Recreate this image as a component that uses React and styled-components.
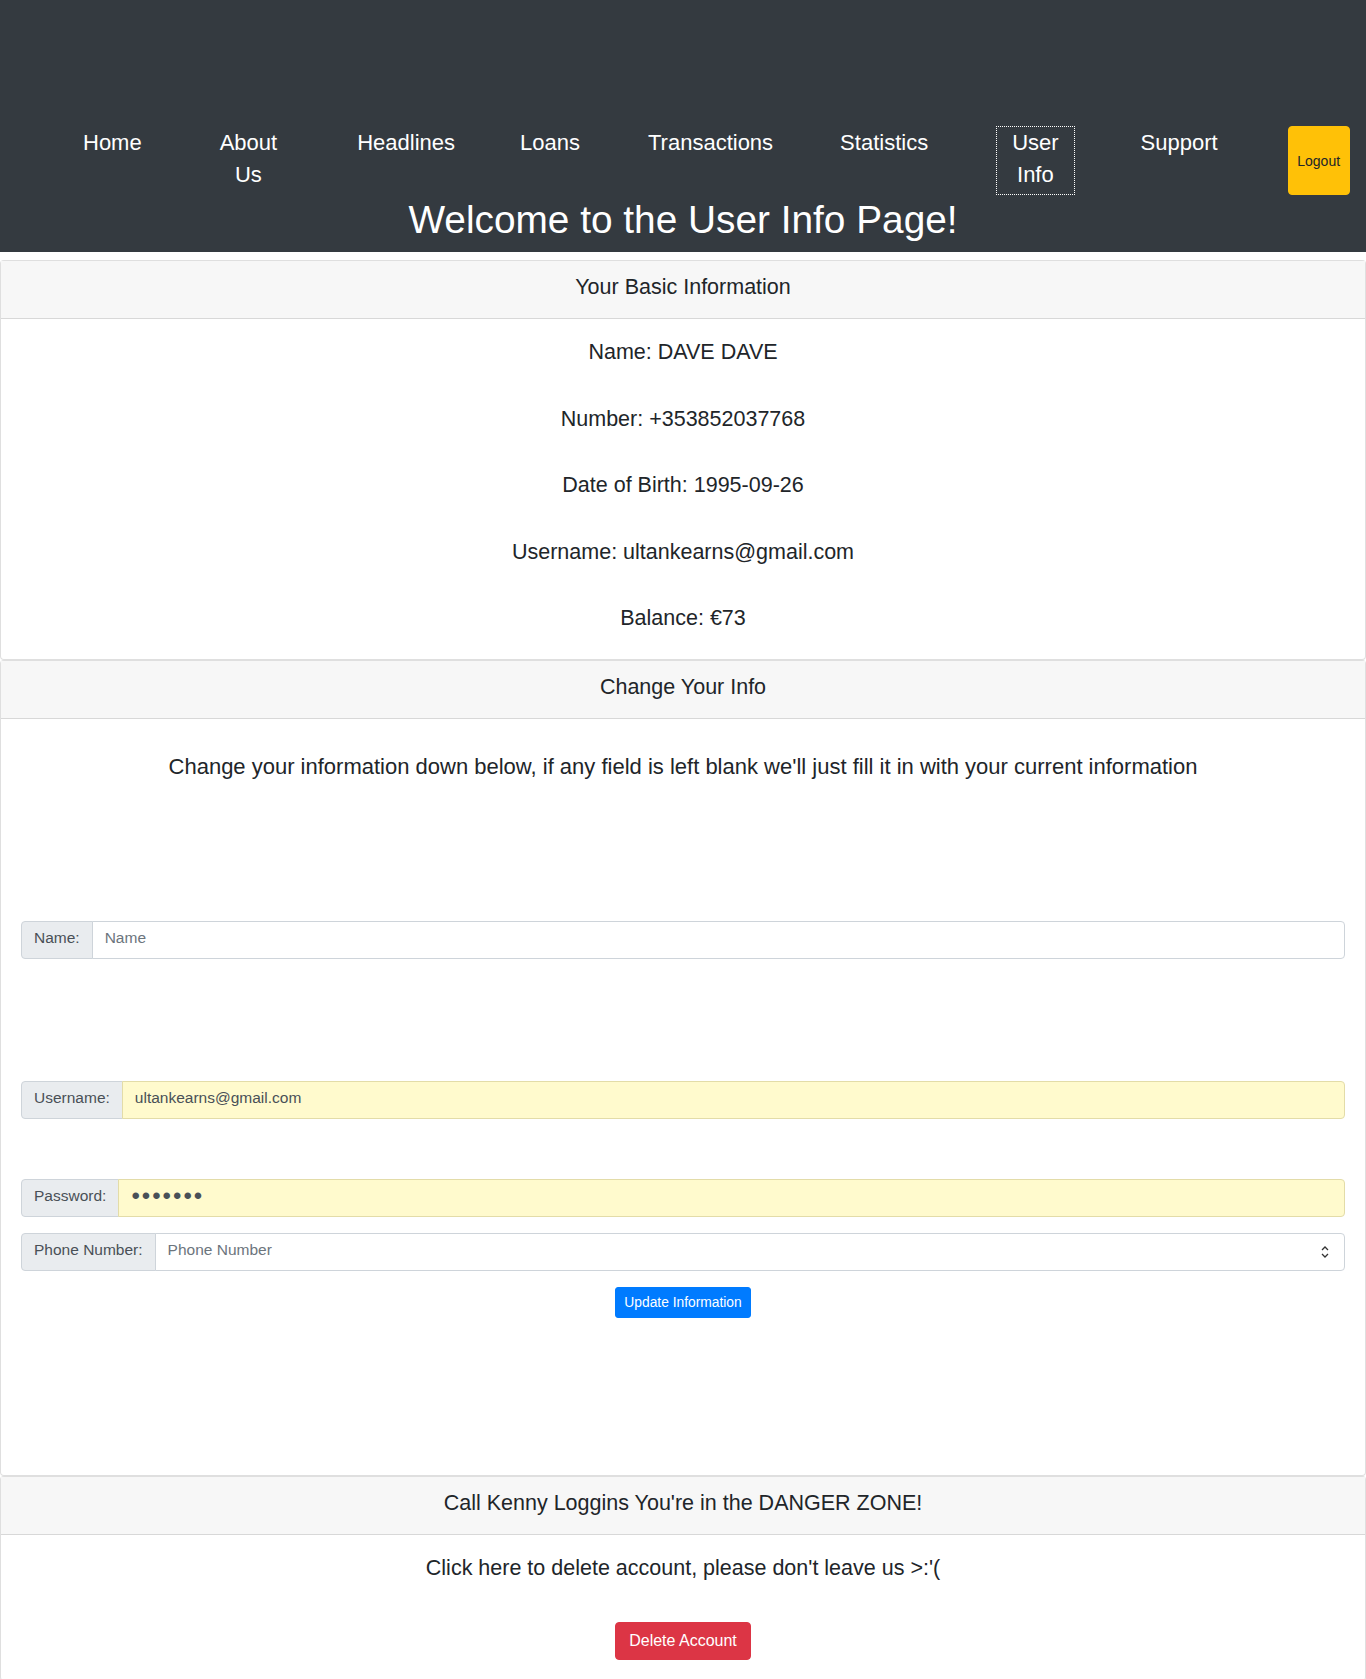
import React from "react";
import styled, { createGlobalStyle } from "styled-components";

const Global = createGlobalStyle`
  html, body { margin: 0; padding: 0; background: #fff; }
  body {
    font-family: "Liberation Sans", Arial, sans-serif;
    color: #212529;
    -webkit-font-smoothing: antialiased;
  }
  * { box-sizing: border-box; }
`;

const Header = styled.header`
  background: #343a40;
  padding: 126px 0 9px;
  margin-bottom: 8px;
`;

const NavList = styled.nav`
  display: flex;
  align-items: stretch;
  padding-left: 67px;
`;

const NavItem = styled.a`
  display: block;
  margin-left: ${(p) => p.$space || 0}px;
  padding: 0 15px 3px;
  border: 1px ${(p) => (p.$active ? "dotted #fff" : "solid transparent")};
  color: #fff;
  font-size: 22px;
  line-height: 32px;
  text-align: center;
  text-decoration: none;
  white-space: nowrap;
  ${(p) => p.$wrap && "white-space: normal; width: min-content;"}
`;

const LogoutButton = styled.button`
  margin-left: ${(p) => p.$space || 0}px;
  width: 62px;
  padding: 0 8px;
  background: #ffc107;
  border: 1px solid #ffc107;
  border-radius: 4px;
  color: #212529;
  font-family: inherit;
  font-size: 14px;
`;

const Title = styled.h1`
  margin: 2px 0 0;
  color: #fff;
  font-weight: 400;
  font-size: 38.8px;
  line-height: 46px;
  text-align: center;
`;

const Card = styled.section`
  border: 1px solid rgba(0, 0, 0, 0.125);
  border-radius: 4px;
  background: #fff;
`;

const CardHeader = styled.div`
  background: #f7f7f7;
  border-bottom: 1px solid rgba(0, 0, 0, 0.125);
  padding: 10px 20px 15px;
  font-size: 21.5px;
  line-height: 32px;
  text-align: center;
`;

const CardBody = styled.div`
  display: flex;
  flex-direction: column;
  gap: ${(p) => p.$gap || 0}px;
  padding: ${(p) => p.$pt || 20}px 20px ${(p) => p.$pb || 20}px;
`;

const Line = styled.p`
  margin: ${(p) => p.$mt || 0}px 0 0;
  font-size: ${(p) => p.$size || 21.5}px;
  line-height: 32px;
  text-align: center;
`;

const InputGroup = styled.div`
  display: flex;
  height: 38px;
  margin-top: ${(p) => p.$mt || 0}px;
`;

const GroupLabel = styled.label`
  display: flex;
  align-items: center;
  padding: 0 12px 4px;
  background: #e9ecef;
  border: 1px solid #ced4da;
  border-radius: 4px 0 0 4px;
  color: #495057;
  font-size: 15.5px;
  white-space: nowrap;
`;

const FieldBox = styled.div`
  flex: 1;
  display: flex;
  align-items: center;
  margin-left: -1px;
  background: ${(p) => (p.$filled ? "#fffacd" : "#fff")};
  border: 1px solid ${(p) => (p.$filled ? "#e3dca8" : "#ced4da")};
  border-radius: 0 4px 4px 0;
`;

const Field = styled.input`
  flex: 1;
  min-width: 0;
  height: 100%;
  padding: 0 12px 4px;
  border: 0;
  outline: none;
  background: transparent;
  color: #495057;
  font-family: inherit;
  font-size: ${(p) => (p.$dots ? 24 : 15.5)}px;
  letter-spacing: ${(p) => (p.$dots ? 2 : 0)}px;
  &::placeholder { color: #6c757d; }
`;

const Spinner = styled.svg`
  width: 10px;
  height: 16px;
  margin-right: 14px;
`;

const ButtonRow = styled.div`
  display: flex;
  justify-content: center;
  margin-top: ${(p) => p.$mt || 0}px;
`;

const Button = styled.button`
  min-width: 136px;
  padding: ${(p) => (p.$small ? "4px 8px" : "6px 12px")};
  border: 1px solid ${(p) => p.$color};
  border-radius: ${(p) => (p.$small ? 3 : 4)}px;
  background: ${(p) => p.$color};
  color: #fff;
  font-family: inherit;
  font-size: ${(p) => (p.$small ? 13.8 : 16)}px;
  line-height: ${(p) => (p.$small ? 21 : 24)}px;
  white-space: nowrap;
`;

const navItems = [
  { label: "Home", space: 0 },
  { label: "About Us", space: 46, wrap: true },
  { label: "Headlines", space: 48 },
  { label: "Loans", space: 33 },
  { label: "Transactions", space: 36 },
  { label: "Statistics", space: 35 },
  { label: "User Info", space: 52, wrap: true, active: true },
  { label: "Support", space: 50 },
];

const info = [
  "Name: DAVE DAVE",
  "Number: +353852037768",
  "Date of Birth: 1995-09-26",
  "Username: ultankearns@gmail.com",
  "Balance: €73",
];

export default function App() {
  return (
    <>
      <Global />
      <Header>
        <NavList>
          {navItems.map((n) => (
            <NavItem key={n.label} href="#" $space={n.space} $wrap={n.wrap} $active={n.active}>
              {n.label}
            </NavItem>
          ))}
          <LogoutButton $space={54}>Logout</LogoutButton>
        </NavList>
        <Title>Welcome to the User Info Page!</Title>
      </Header>

      <Card>
        <CardHeader>Your Basic Information</CardHeader>
        <CardBody $gap={34.6} $pt={17} $pb={25}>
          {info.map((t) => (
            <Line key={t}>{t}</Line>
          ))}
        </CardBody>
      </Card>

      <Card>
        <CardHeader>Change Your Info</CardHeader>
        <CardBody $pb={157}>
          <Line $mt={12} $size={22}>
            Change your information down below, if any field is left blank we'll just fill it in with your current information
          </Line>
          <InputGroup $mt={138}>
            <GroupLabel>Name:</GroupLabel>
            <FieldBox>
              <Field placeholder="Name" />
            </FieldBox>
          </InputGroup>
          <InputGroup $mt={122}>
            <GroupLabel>Username:</GroupLabel>
            <FieldBox $filled>
              <Field defaultValue="ultankearns@gmail.com" />
            </FieldBox>
          </InputGroup>
          <InputGroup $mt={60}>
            <GroupLabel>Password:</GroupLabel>
            <FieldBox $filled>
              <Field type="password" $dots defaultValue="1234567" />
            </FieldBox>
          </InputGroup>
          <InputGroup $mt={16}>
            <GroupLabel>Phone Number:</GroupLabel>
            <FieldBox>
              <Field placeholder="Phone Number" />
              <Spinner viewBox="0 0 10 16" fill="none" stroke="#333" strokeWidth="1.3">
                <path d="M2 6 L5 3 L8 6" />
                <path d="M2 10 L5 13 L8 10" />
              </Spinner>
            </FieldBox>
          </InputGroup>
          <ButtonRow $mt={16}>
            <Button $small $color="#007bff">Update Information</Button>
          </ButtonRow>
        </CardBody>
      </Card>

      <Card>
        <CardHeader>Call Kenny Loggins You're in the DANGER ZONE!</CardHeader>
        <CardBody $pt={17}>
          <Line>Click here to delete account, please don't leave us &gt;:'(</Line>
          <ButtonRow $mt={38}>
            <Button $color="#dc3545">Delete Account</Button>
          </ButtonRow>
        </CardBody>
      </Card>
    </>
  );
}
